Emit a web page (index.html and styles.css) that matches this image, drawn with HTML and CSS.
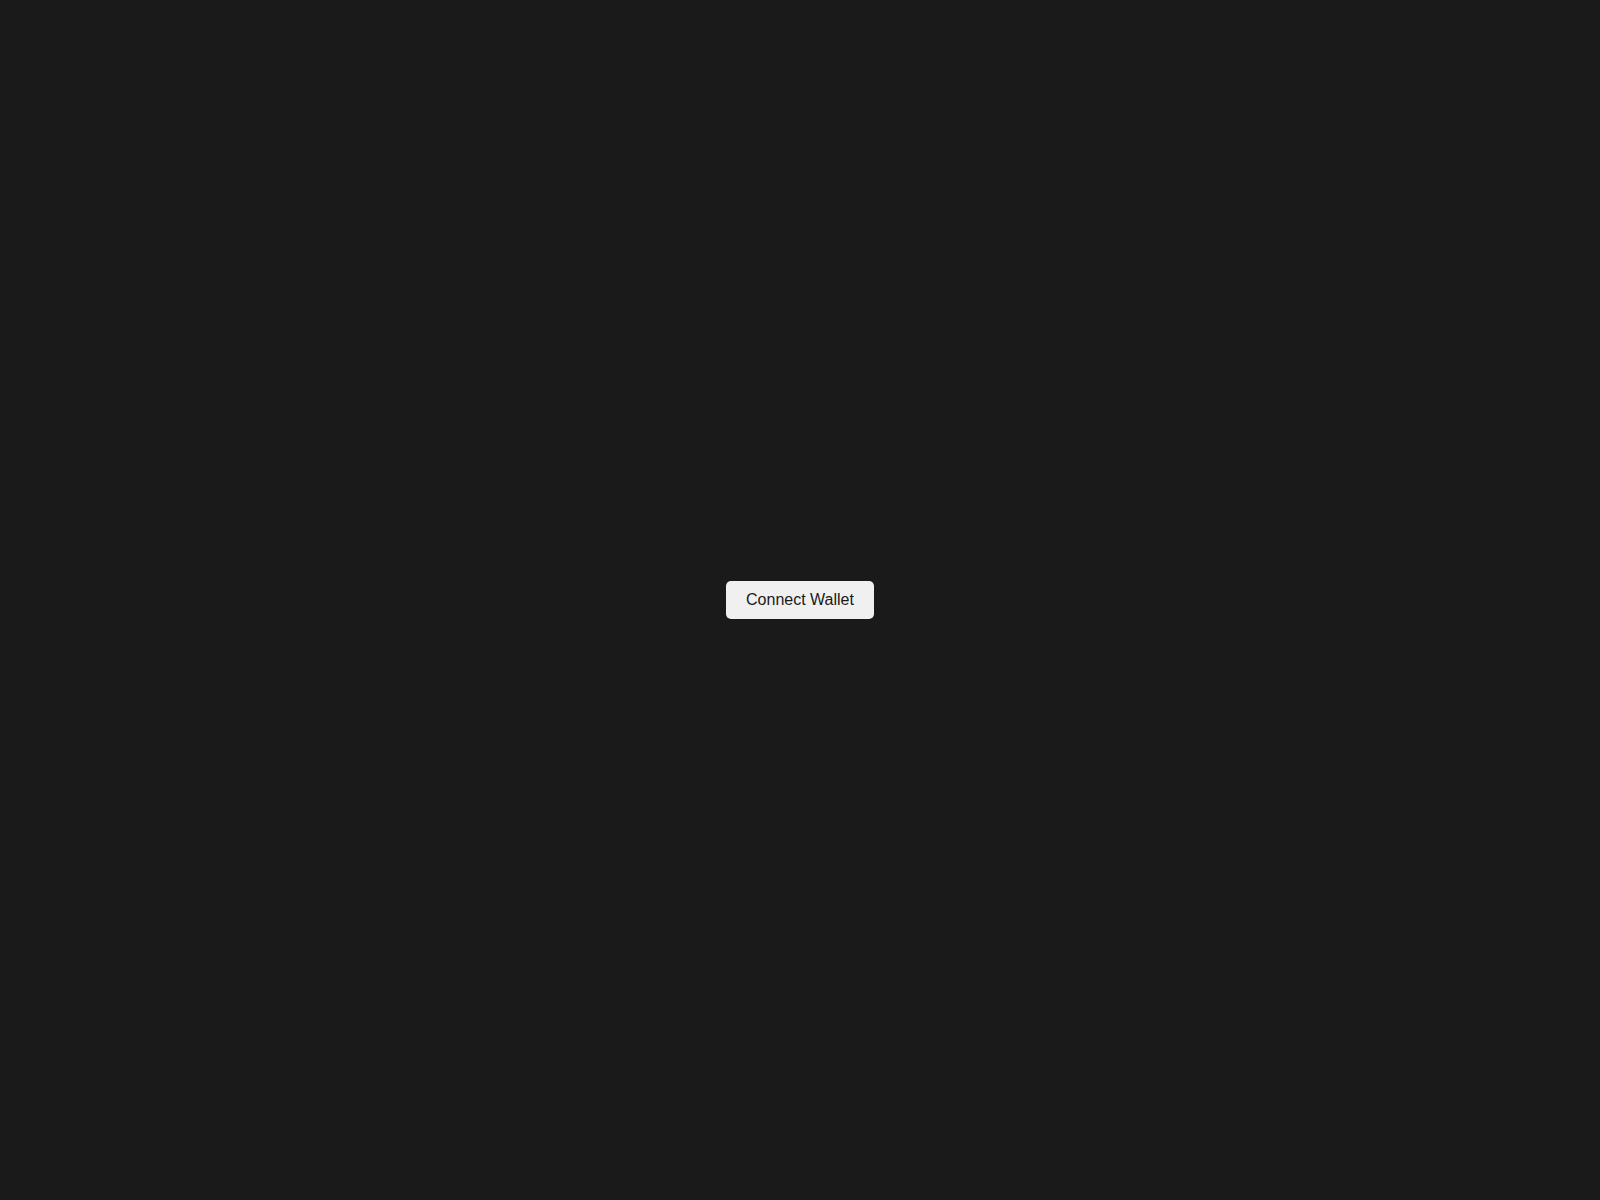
FILE: index.html
```html
<!DOCTYPE html>
<html lang="en">
<head>
<meta charset="utf-8">
<title>Connect Wallet</title>
<link rel="stylesheet" href="styles.css">
</head>
<body>
<main class="screen">
  <button class="connect-btn" type="button">Connect Wallet</button>
</main>
</body>
</html>
```
FILE: styles.css
```css
html, body {
  margin: 0;
  padding: 0;
  height: 100%;
  background: #1a1a1a;
}
.screen {
  height: 100vh;
  display: flex;
  align-items: center;
  justify-content: center;
}
.connect-btn {
  font-family: "Liberation Sans", Arial, sans-serif;
  font-size: 16px;
  line-height: 18px;
  padding: 10px 20px;
  color: #1a1a1a;
  background: #f0f0f0;
  border: none;
  border-radius: 5px;
  cursor: pointer;
}
```
